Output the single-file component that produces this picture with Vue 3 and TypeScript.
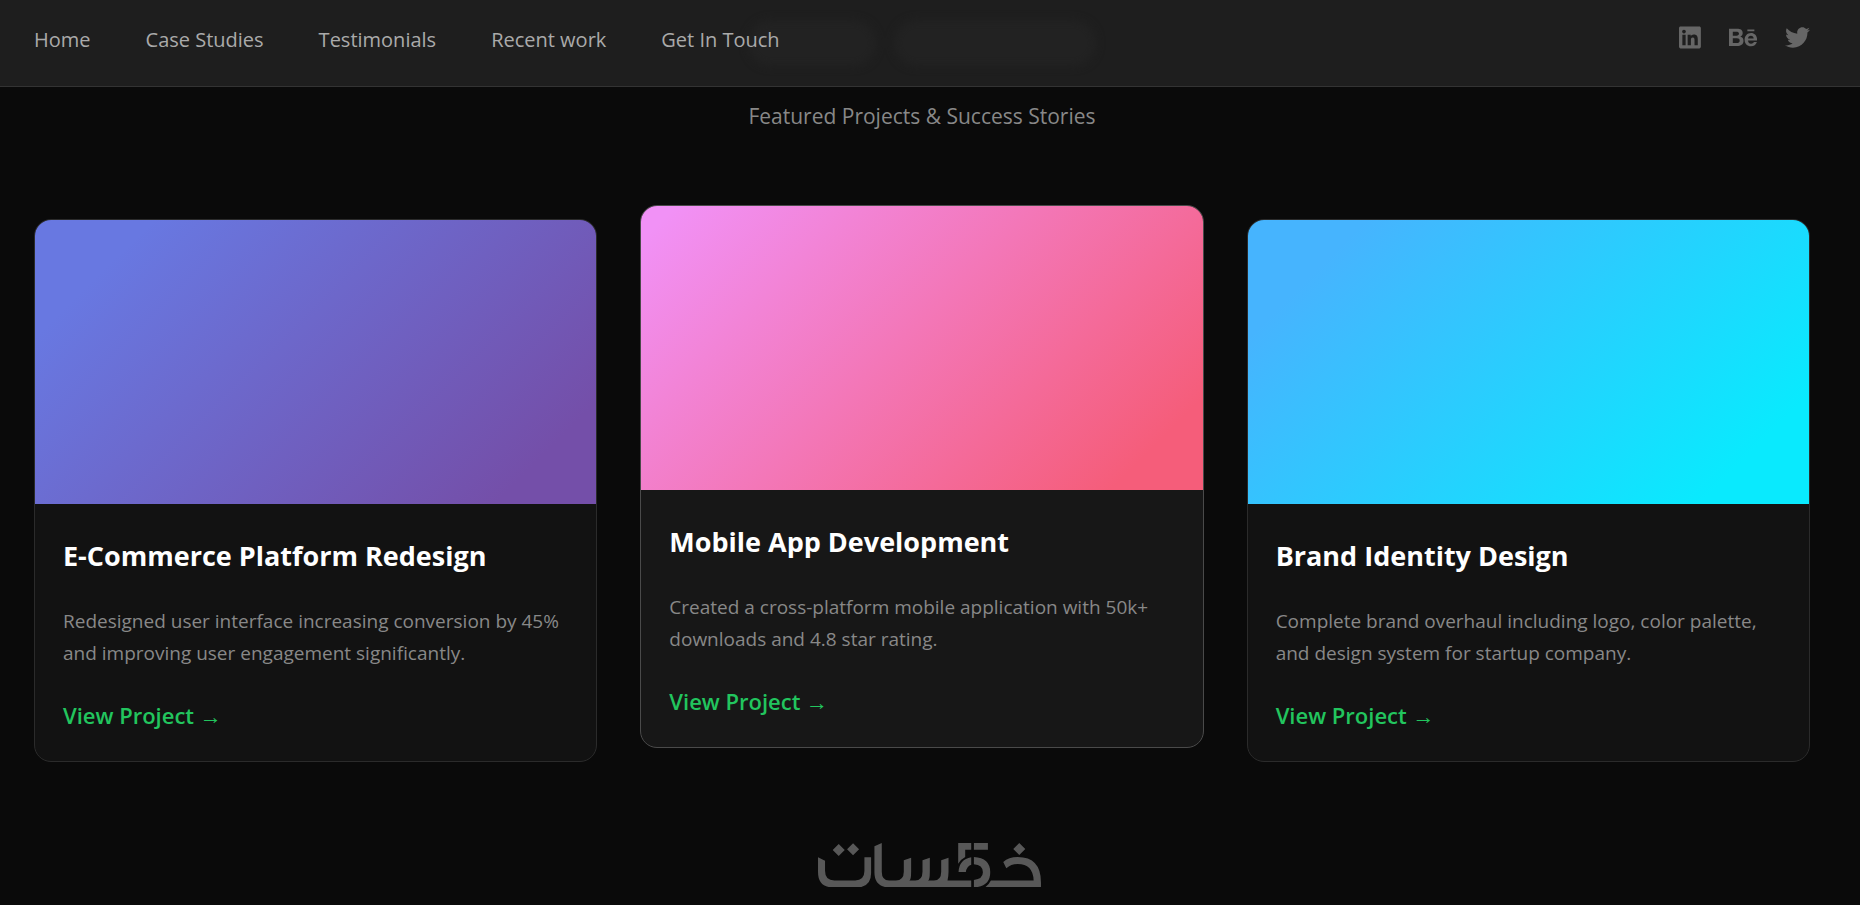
<script setup lang="ts">
interface Project {
  title: string
  text: string
  tone: string
  featured: boolean
}

const links: string[] = ['Home', 'Case Studies', 'Testimonials', 'Recent work', 'Get In Touch']

const projects: Project[] = [
  {
    title: 'E-Commerce Platform Redesign',
    text: 'Redesigned user interface increasing conversion by 45% and improving user engagement significantly.',
    tone: 'violet',
    featured: false,
  },
  {
    title: 'Mobile App Development',
    text: 'Created a cross-platform mobile application with 50k+ downloads and 4.8 star rating.',
    tone: 'pink',
    featured: true,
  },
  {
    title: 'Brand Identity Design',
    text: 'Complete brand overhaul including logo, color palette, and design system for startup company.',
    tone: 'cyan',
    featured: false,
  },
]
</script>

<template>
  <div class="page">
    <header class="bar">
      <div class="glow" aria-hidden="true"><span class="blob short"></span><span class="blob long"></span></div>
      <nav class="nav" aria-label="Main">
        <a v-for="link in links" :key="link" href="#">{{ link }}</a>
      </nav>
      <div class="social">
        <a href="#" aria-label="LinkedIn">
          <svg viewBox="0 0 448 512"><path d="M416 32H31.9C14.3 32 0 46.5 0 64.3v383.4C0 465.5 14.3 480 31.9 480H416c17.6 0 32-14.5 32-32.3V64.3c0-17.8-14.4-32.3-32-32.3zM135.4 416H69V202.2h66.5V416zm-33.2-243c-21.3 0-38.5-17.3-38.5-38.5S80.9 96 102.2 96c21.2 0 38.5 17.3 38.5 38.5 0 21.3-17.2 38.5-38.5 38.5zm282.1 243h-66.4V312c0-24.8-.5-56.7-34.5-56.7-34.6 0-39.9 27-39.9 54.9V416h-66.4V202.2h63.7v29.2h.9c8.9-16.8 30.6-34.5 62.9-34.5 67.2 0 79.7 44.3 79.7 101.9V416z" /></svg>
        </a>
        <a href="#" aria-label="Behance">
          <svg viewBox="0 0 576 512"><path d="M232 237.2c31.8-15.2 48.4-38.2 48.4-74 0-70.6-52.6-87.8-113.3-87.8H0v354.4h171.8c64.4 0 124.9-30.9 124.9-102.9 0-44.5-21.1-77.4-64.7-89.7zM77.9 135.9H151c28.1 0 53.4 7.9 53.4 40.5 0 30.1-19.7 42.2-47.5 42.2h-79v-82.7zm83.3 233.7H77.9V272h84.9c34.3 0 56 14.3 56 50.6 0 35.8-25.9 47-57.6 47zm358.5-240.7H376V94h143.7v34.9zM576 305.2c0-75.9-44.4-139.2-124.9-139.2-78.2 0-131.3 58.8-131.3 135.8 0 79.9 50.3 134.7 131.3 134.7 61.3 0 101-27.6 120.1-86.3H509c-6.7 21.9-34.3 33.5-55.7 33.5-41.3 0-63-24.2-63-65.3h185.1c.3-4.2.6-8.7.6-13.2zM390.4 274c2.3-33.7 24.7-54.8 58.5-54.8 35.4 0 53.2 20.8 56.2 54.8H390.4z" /></svg>
        </a>
        <a href="#" aria-label="Twitter">
          <svg viewBox="0 0 512 512"><path d="M459.37 151.716c.325 4.548.325 9.097.325 13.645 0 138.72-105.583 298.558-298.558 298.558-59.452 0-114.68-17.219-161.137-47.106 8.447.974 16.568 1.299 25.34 1.299 49.055 0 94.213-16.568 130.274-44.832-46.132-.975-84.792-31.188-98.112-72.772 6.498.974 12.995 1.624 19.818 1.624 9.421 0 18.843-1.3 27.614-3.573-48.081-9.747-84.143-51.98-84.143-102.985v-1.299c13.969 7.797 30.214 12.67 47.431 13.319-28.264-18.843-46.781-51.005-46.781-87.391 0-19.492 5.197-37.36 14.294-52.954 51.655 63.675 129.3 105.258 216.365 109.807-1.624-7.797-2.599-15.918-2.599-24.04 0-57.828 46.782-104.934 104.934-104.934 30.213 0 57.502 12.67 76.67 33.137 23.715-4.548 46.456-13.32 66.599-25.34-7.798 24.366-24.366 44.833-46.132 57.827 21.117-2.273 41.584-8.122 60.426-16.243-14.292 20.791-32.161 39.308-52.628 54.253z" /></svg>
        </a>
      </div>
    </header>

    <main class="main">
      <p class="lead">Featured Projects &amp; Success Stories</p>
      <section class="cards" aria-label="Projects">
        <article v-for="p in projects" :key="p.title" class="card" :class="{ featured: p.featured }">
          <div class="cover" :class="p.tone"></div>
          <div class="body">
            <h3>{{ p.title }}</h3>
            <p>{{ p.text }}</p>
            <a href="#">View Project →</a>
          </div>
        </article>
      </section>
    </main>

    <footer class="foot">
      <svg class="mark" viewBox="54 50 668 133" role="img" aria-label="Khamsat">
        <path d="M98 71l18-18 18 18-18 18zM141 69l18-18 18 18-18 18zM639 68l18-18 18 18-18 18z" />
        <path d="M54 93l21 10v30q0 29 28 29h62q28 0 28-28V93h20v48q0 42-42 42h-72q-45 0-45-46z" />
        <path d="M223 60l22-10v86q0 26 22 26h20q24 0 24-26v-34l22-8v42q0 26-6 26h18q22 0 22-26v-34l22-8v42q0 26-6 26h18q22 0 22-26v-34l22-8v42q0 14-3 26h71v21H268q-45 0-45-45z" />
        <path d="M474 50h39v20h-18v22q-12 6-21 20zM521 50h42v20h-42zM475 137q2-38 38-44v22q-14 5-16 22zM521 92q49 2 49 46 0 43-49 45v-22q27-3 27-23 0-22-27-24z" />
        <path d="M572 162h128q-2-49-48-49-20 0-34 13l-9-19q16-15 43-15 70 0 70 76v15H554q10-6 18-21z" />
      </svg>
    </footer>
  </div>
</template>

<style>
body {
  margin: 0;
  background: #0a0a0a;
}
</style>

<style scoped>
.page {
  min-height: 100vh;
  overflow: hidden;
  background: #0a0a0a;
  font-family: 'Segoe UI', 'Open Sans', 'Noto Sans', sans-serif;
}
a {
  text-decoration: none;
}
.bar {
  position: relative;
  display: flex;
  justify-content: space-between;
  box-sizing: border-box;
  height: 87px;
  padding: 25px 50px 0 34px;
  background: #1e1e1e;
  border-bottom: 1px solid #333;
}
.glow {
  position: absolute;
  inset: 20px 17px auto 0;
  display: flex;
  justify-content: center;
  gap: 18px;
  filter: blur(4px);
}
.blob {
  height: 46px;
  border-radius: 23px;
  background: #222;
}
.short {
  width: 128px;
}
.long {
  width: 202px;
}
.nav {
  position: relative;
  display: flex;
  gap: 55px;
}
.nav a {
  color: #aaa;
  font-size: 20px;
  line-height: 29px;
}
.social {
  position: relative;
  display: flex;
  gap: 28px;
}
.social a {
  height: 25px;
}
.social svg {
  display: block;
  height: 25px;
  fill: #666;
}
.main {
  padding: 13px 50px 0 34px;
}
.lead {
  margin: 0;
  color: #888;
  font-size: 21px;
  line-height: 32px;
  text-align: center;
}
.cards {
  display: grid;
  grid-template-columns: repeat(3, 1fr);
  gap: 43px;
  margin-top: 87px;
}
.card {
  overflow: hidden;
  background: #121212;
  border: 1px solid #2b2b2b;
  border-radius: 17px;
}
.featured {
  background: #171717;
  border-color: #4a4a4a;
  transform: translateY(-14px);
}
.cover {
  height: 284px;
}
.violet {
  background: linear-gradient(135deg, #6878e1 14%, #744fa9 88%);
}
.pink {
  background: linear-gradient(135deg, #f191f6 4%, #f55d7a 89%);
}
.cyan {
  background: linear-gradient(135deg, #46b4fe 14%, #09eafe 87%);
}
.body {
  padding: 32px 28px 28px;
}
h3 {
  margin: 0 0 29px;
  color: #fff;
  font-size: 27px;
  font-weight: 700;
  line-height: 40px;
}
.body p {
  margin: 0 0 28px;
  color: #888;
  font-size: 19px;
  line-height: 32px;
}
.body a {
  display: block;
  color: #22c55e;
  font-size: 22px;
  font-weight: 600;
  line-height: 36px;
}
.foot {
  display: flex;
  justify-content: center;
  padding: 81px 1px 16px 0;
}
.mark {
  display: block;
  width: 223px;
  fill: #585858;
}
</style>
